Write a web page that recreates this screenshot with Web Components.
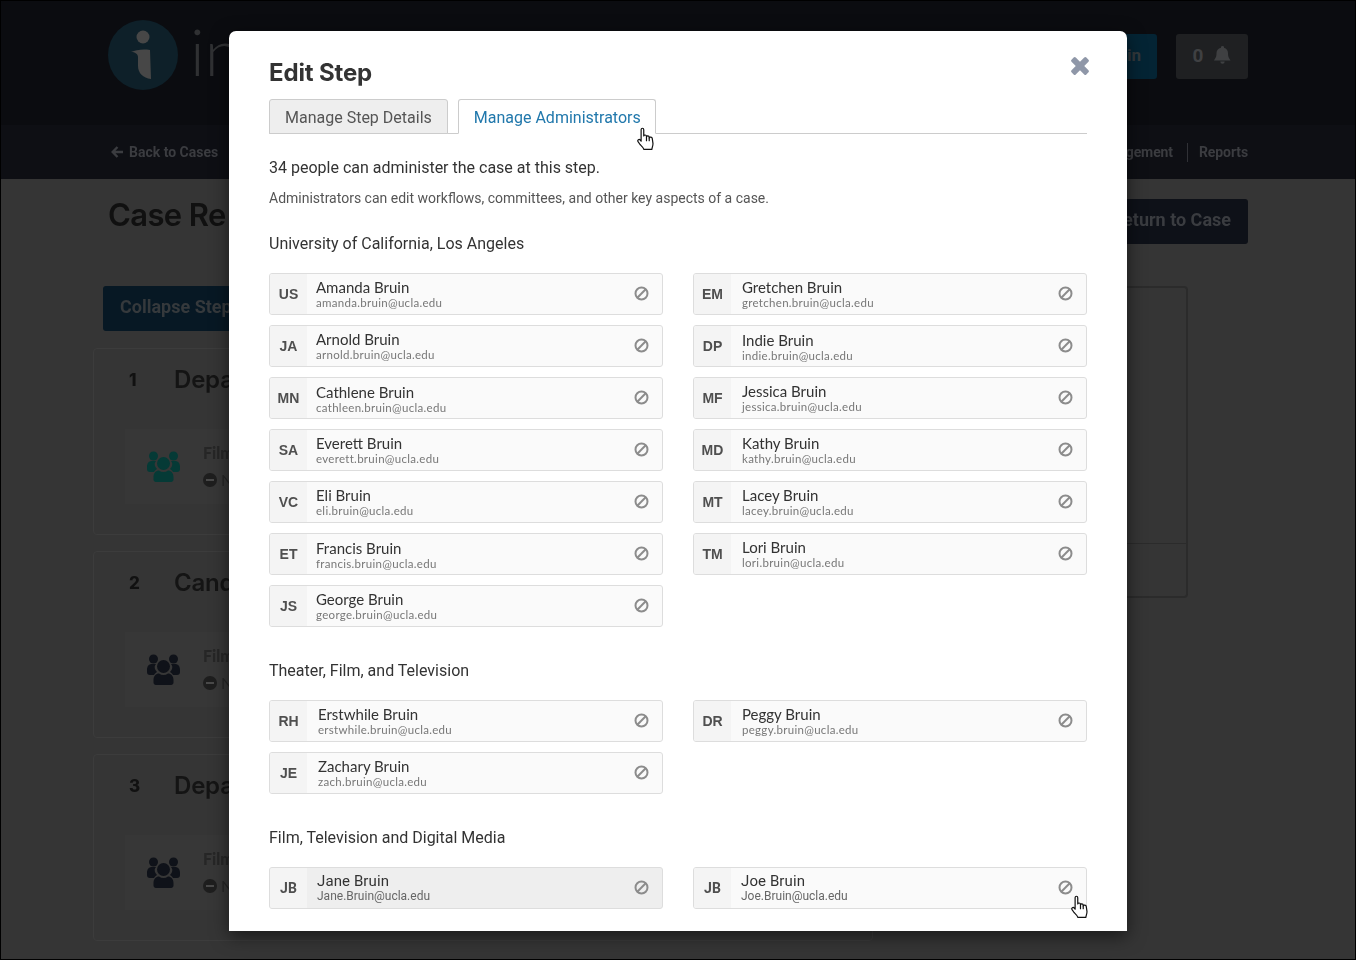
<!DOCTYPE html>
<html lang="en"><head><meta charset="utf-8"><title>Edit Step</title>
<style>html,body{margin:0;padding:0;background:#353535}</style></head>
<body>
<x-page>
  <x-backdrop slot="back"></x-backdrop>
  <x-modal slot="front" heading="Edit Step">
    <x-section heading="University of California, Los Angeles">
      <x-person initials="US" name="Amanda Bruin" email="amanda.bruin@ucla.edu" pad="9"></x-person>
      <x-person initials="EM" name="Gretchen Bruin" email="gretchen.bruin@ucla.edu" pad="11"></x-person>
      <x-person initials="JA" name="Arnold Bruin" email="arnold.bruin@ucla.edu" pad="9"></x-person>
      <x-person initials="DP" name="Indie Bruin" email="indie.bruin@ucla.edu" pad="11" dy="1"></x-person>
      <x-person initials="MN" name="Cathlene Bruin" email="cathleen.bruin@ucla.edu" pad="9" dy="1"></x-person>
      <x-person initials="MF" name="Jessica Bruin" email="jessica.bruin@ucla.edu" pad="11"></x-person>
      <x-person initials="SA" name="Everett Bruin" email="everett.bruin@ucla.edu" pad="9"></x-person>
      <x-person initials="MD" name="Kathy Bruin" email="kathy.bruin@ucla.edu" pad="11"></x-person>
      <x-person initials="VC" name="Eli Bruin" email="eli.bruin@ucla.edu" pad="9"></x-person>
      <x-person initials="MT" name="Lacey Bruin" email="lacey.bruin@ucla.edu" pad="11"></x-person>
      <x-person initials="ET" name="Francis Bruin" email="francis.bruin@ucla.edu" pad="9" dy="1"></x-person>
      <x-person initials="TM" name="Lori Bruin" email="lori.bruin@ucla.edu" pad="11"></x-person>
      <x-person initials="JS" name="George Bruin" email="george.bruin@ucla.edu" pad="9"></x-person>
    </x-section>
    <x-section heading="Theater, Film, and Television">
      <x-person initials="RH" name="Erstwhile Bruin" email="erstwhile.bruin@ucla.edu" pad="11"></x-person>
      <x-person initials="DR" name="Peggy Bruin" email="peggy.bruin@ucla.edu" pad="11"></x-person>
      <x-person initials="JE" name="Zachary Bruin" email="zach.bruin@ucla.edu" pad="11"></x-person>
    </x-section>
    <x-section heading="Film, Television and Digital Media">
      <x-person initials="JB" name="Jane Bruin" email="Jane.Bruin@ucla.edu" pad="10" variant="roboto" hover></x-person>
      <x-person initials="JB" name="Joe Bruin" email="Joe.Bruin@ucla.edu" pad="10" variant="roboto"></x-person>
    </x-section>
    <x-pointer slot="cursor" style="left:407px;top:96px"></x-pointer>
    <x-pointer slot="cursor" style="left:841px;top:864px"></x-pointer>
  </x-modal>
</x-page>

<script>
function def(name, html, cls){
  const t=document.createElement('template'); t.innerHTML=html;
  customElements.define(name, class extends HTMLElement{
    connectedCallback(){
      if(this.shadowRoot) return;
      const r=this.attachShadow({mode:'open'});
      r.appendChild(t.content.cloneNode(true));
      if(cls) cls(this,r);
    }
  });
}
def('x-page',`<style>
:host{display:block;width:1356px;height:960px;box-sizing:border-box;border:1px solid #000;position:relative;overflow:hidden;background:#353535}
.front{position:absolute;left:228px;top:30px;display:block}
</style><slot name="back"></slot><div class="front"><slot name="front"></slot></div>`);

const people=c=>`<svg width="33" height="31" viewBox="0 0 33 31" fill="${c}"><circle cx="6.5" cy="5" r="4.5"/><circle cx="26.5" cy="5" r="4.5"/><path d="M0 16c0-4 2-6 5-6h4c-1.400 1.500-1.600 3-1 5 .5 1 1 2 2 3-1.500.800-2.500 2-3 3H3c-2 0-3-1-3-3z"/><path d="M33 16c0-4-2-6-5-6h-4c1.400 1.500 1.600 3 1 5-.5 1-1 2-2 3 1.500.800 2.500 2 3 3h4c2 0 3-1 3-3z"/><circle cx="16.500" cy="12.500" r="6.500"/><path d="M9 31c-1.500 0-2.500-1-2.500-2.500V26c0-4 2.500-6.500 5.500-6.500 1.500 1 3 1.500 4.500 1.500s3-.5 4.500-1.500c3 0 5.500 2.500 5.500 6.500v2.500c0 1.500-1 2.500-2.500 2.500z"/></svg>`;
const card=(n,t,c)=>`<section class="card"><div class="chead"><span class="num">${n}</span><span class="ctitle">${t}</span></div>
<div class="inner"><div class="ic">${people(c)}</div><div class="ctext"><b>Film</b><span class="st"><i></i>N</span></div></div></section>`;

def('x-backdrop',`<style>
:host{display:block;height:958px;filter:blur(.6px);font-family:Roboto,sans-serif;color:#3b3c40;overflow:hidden}
header{height:124px;background:#0b0c10;box-sizing:border-box;padding:19px 107px 0 107px;display:flex;justify-content:space-between;align-items:flex-start}
.brand{display:flex;align-items:center;gap:12px;height:70px}
.word{font:300 66px/70px Lato,sans-serif;color:#303133;margin-top:-8px}
.tools{display:flex;gap:19px;margin-top:14px}
.signin{height:45px;width:80px;box-sizing:border-box;background:#042434;border-radius:3px;color:#33393c;font:700 17px/43px Roboto,sans-serif;text-align:right;padding-right:16px}
.bell{height:45px;width:72px;box-sizing:border-box;background:#1f2022;border-radius:3px;display:flex;align-items:center;justify-content:center;gap:11px;color:#3f4042;font:700 19px Roboto,sans-serif;padding-bottom:3px}
nav{height:54px;background:#0e0f14;display:flex;justify-content:space-between;align-items:center;padding:0 107px 0 110px;font:700 14px Roboto,sans-serif}
nav .l{display:flex;align-items:center;gap:6px}
nav .r{display:flex;align-items:center;gap:11px;letter-spacing:-.1px}
nav .r i{display:block;width:1px;height:19px;background:#303136;margin-left:3px}
main{padding:0 107px 0 92px}
.top{display:flex;justify-content:space-between;padding:20px 0 0 15px;height:45px}
h1{margin:0;font:600 31px/32px Inter,sans-serif;color:#101010;letter-spacing:-.6px}
.ret{width:140px;height:45px;background:#0e1118;border-radius:3px;color:#3a3c40;font:700 18px/41px Roboto,sans-serif;box-sizing:border-box;padding-right:17px;text-align:right;white-space:nowrap}
.cols{display:grid;grid-template-columns:780px 288px;gap:27px;margin-top:42px}
.coll{margin-left:10px;height:45px;width:200px;background:#071824;border-radius:3px;color:#35393c;font:700 18px/41px Roboto,sans-serif;padding-left:17px;box-sizing:border-box;white-space:nowrap}
.card{margin-top:17px;height:187px;box-sizing:border-box;border:1px solid #3c3c3c;border-radius:4px;margin-bottom:-1px}
.chead{height:60px;display:flex;align-items:center;box-sizing:border-box;padding:0 0 0 35px}
.num{font:800 17px Inter,sans-serif;color:#111;width:45px;padding-top:2px}
.ctitle{font:600 24px Inter,sans-serif;color:#141414;letter-spacing:-.2px}
.inner{margin:20px 0 0 31px;height:75px;background:#373737;display:flex;align-items:center}
.ic{width:78px;padding-left:22px;box-sizing:border-box;display:flex}
.ctext{display:flex;flex-direction:column;gap:9px;font:700 16px Lato,sans-serif;color:#262626}
.ctext b{display:block;line-height:18px}
.st{display:flex;align-items:center;gap:4px;font-weight:400;color:#262626;line-height:18px}
.st i{display:block;width:14px;height:14px;border-radius:50%;background:#1e1e1e;position:relative}
.st i::after{content:"";position:absolute;left:3px;right:3px;top:6px;height:2px;background:#4a4a4a}
.panel{height:312px;box-sizing:border-box;border:2px solid #2b2b2b;border-radius:4px;display:flex;flex-direction:column;justify-content:flex-end}
.panel div{height:52px;border-top:1px solid #2b2b2b}
</style>
<header>
  <div class="brand">
    <svg width="70" height="70" viewBox="108 20 70 70"><circle cx="143" cy="55" r="35" fill="#0e2029"/><circle cx="143" cy="37" r="6.500" fill="#474747"/><path d="M131 52C136 50 142 49 150 50L151 79C143 78 138 73 138 66L138 57C138 54 135 52 131 52Z" fill="#474747"/></svg>
    <span class="word">in</span>
  </div>
  <div class="tools">
    <div class="signin">in</div>
    <div class="bell"><span>0</span><svg width="17" height="18" viewBox="0 0 17 18" fill="#3f4042"><path d="M8.500 0a1.500 1.500 0 0 1 1.500 1.700c2.500.600 4 2.800 4 5.300 0 4 1 5 2.500 7.500H0C1.500 12 2.500 11 2.500 7c0-2.500 1.500-4.700 4.500-5.300A1.500 1.500 0 0 1 8.500 0z"/><path d="M6.300 15.500h4.400a2.200 2.200 0 0 1-4.400 0z"/></svg></div>
  </div>
</header>
<nav>
  <div class="l"><svg width="12" height="12" viewBox="0 0 12 12" fill="none" stroke="#3b3c40" stroke-width="2.400"><path d="M6.500 1 1.700 6l4.800 5M2 6h10"/></svg><span>Back to Cases</span></div>
  <div class="r"><span>gement</span><i></i><span>Reports</span></div>
</nav>
<main>
  <div class="top"><h1>Case Re</h1><div class="ret">eturn to Case</div></div>
  <div class="cols">
    <div><div class="coll">Collapse Step</div>
    ${card(1,'Depa','#053a36')}${card(2,'Cand','#0f1219')}${card(3,'Depa','#0f1219')}</div>
    <div class="panel"><div></div></div>
  </div>
</main>`);

def('x-modal',`<style>
:host{display:block;position:relative;width:898px;height:900px;background:#fff;border-radius:7px 7px 0 0;box-shadow:0 5px 18px rgba(0,0,0,.55);font-family:Roboto,sans-serif;color:#333}
.body{height:900px;box-sizing:border-box;padding:27px 40px 0;overflow:hidden}
.hd{display:flex;justify-content:space-between;align-items:flex-start}
h2{margin:0;font:700 24px/30px Inter,sans-serif;color:#333;letter-spacing:-.15px}
.x{display:block;margin:-2px -3px 0 0}
.tabs{display:flex;gap:10px;margin-top:11px;border-bottom:1px solid #ccc;height:34px}
.tab{height:35px;box-sizing:border-box;border:1px solid #ccc;border-radius:3px 3px 0 0;font:400 16px/36px Roboto,sans-serif;padding:0 15px;background:#eee;color:#555}
.tab.on{background:#fff;border-bottom-color:#fff;color:#2178ac;padding-right:14px}
.lead{margin:22px 0 0;font:400 16px/24px Roboto,sans-serif;color:#333}
.sub{margin:8px 0 0;font:400 14px/20px Roboto,sans-serif;color:#555}
</style>
<div class="body">
  <div class="hd"><h2></h2><svg class="x" width="20" height="20" viewBox="0 0 20 20" fill="#8f97a8"><rect x="-.5" y="7" width="21" height="6" rx="1.500" transform="rotate(45 10 10)"/><rect x="-.5" y="7" width="21" height="6" rx="1.500" transform="rotate(-45 10 10)"/></svg></div>
  <div class="tabs"><div class="tab">Manage Step Details</div><div class="tab on">Manage Administrators</div></div>
  <p class="lead">34 people can administer the case at this step.</p>
  <p class="sub">Administrators can edit workflows, committees, and other key aspects of a case.</p>
  <slot></slot>
</div>
<slot name="cursor"></slot>`,(el,r)=>{r.querySelector('h2').textContent=el.getAttribute('heading');});

def('x-section',`<style>
:host{display:block;margin-top:33px}
:host(:first-of-type){margin-top:25px}
h3{margin:0 0 18px;font:400 16px/22px Roboto,sans-serif;color:#333}
.g{display:grid;grid-template-columns:394px 394px;column-gap:30px;row-gap:10px}
</style><h3></h3><div class="g"><slot></slot></div>`,(el,r)=>{r.querySelector('h3').textContent=el.getAttribute('heading');});

def('x-person',`<style>
:host{display:flex;height:42px;box-sizing:border-box;border:1px solid #ddd;border-radius:3px;background:#fafafa;overflow:hidden}
:host([hover]){background:#eee}
.in{flex:none;width:37px;background:#f4f4f4;display:flex;align-items:center;justify-content:center;font:700 14px "Liberation Sans",sans-serif;color:#4f4f4f}
.t{flex:1;min-width:0;display:flex;flex-direction:column;box-sizing:border-box;padding-top:5px}
.n{font:400 15px/16px Lato,sans-serif;color:#333}
.e{font:400 11.500px/14px Lato,sans-serif;color:#777;letter-spacing:.3px;margin-top:1px}
:host([variant=roboto]) .t{padding-top:5px}
:host([variant=roboto]) .n{font:400 15px/16px Roboto,sans-serif;letter-spacing:.1px;color:#333}
:host([variant=roboto]) .e{font:400 12px/14px Roboto,sans-serif;letter-spacing:0;color:#666;margin-top:0}
:host([variant=roboto]) .in{font-family:Roboto,sans-serif}
svg{flex:none;align-self:center;margin:0 13px 2px 0}
</style><div class="in"></div><div class="t"><span class="n"></span><span class="e"></span></div>
<svg width="15" height="15" viewBox="0 0 15 15" fill="none" stroke="#8c8c8c" stroke-width="2"><circle cx="7.500" cy="7.500" r="6"/><path d="M3.300 11.700 11.700 3.300"/></svg>`,(el,r)=>{
  const g=a=>el.getAttribute(a);
  r.querySelector('.in').textContent=g('initials');
  r.querySelector('.n').textContent=g('name');
  r.querySelector('.e').textContent=g('email');
  const t=r.querySelector('.t');
  t.style.paddingLeft=(g('pad')||9)+'px';
  if(g('dy')) t.style.paddingTop=(5+ +g('dy'))+'px';
});

def('x-pointer',`<style>:host{display:block;position:absolute;width:19px;height:23px;line-height:0}</style>
<svg width="19" height="23" viewBox="0 0 16 21" fill="#fff" stroke="#111" stroke-width="1.100" stroke-linejoin="round" stroke-linecap="round"><path d="M4 2.400C4 .7 6.400 .7 6.400 2.400V8.200C6.600 7 8.700 7 8.900 8.400V9C9.100 7.800 11.200 7.900 11.400 9.300V10C11.600 8.900 14 9 14.200 10.600L14.800 15C15 17 14 18.500 13.800 20.500H6.600C6 18.800 4.500 17.500 3 16L1.200 13.400C.3 11.900 2.200 10.700 3.200 11.900L4 13Z"/><path d="M8.900 9V12.500M11.400 10V12.500" fill="none"/></svg>`);
</script>
</body></html>
